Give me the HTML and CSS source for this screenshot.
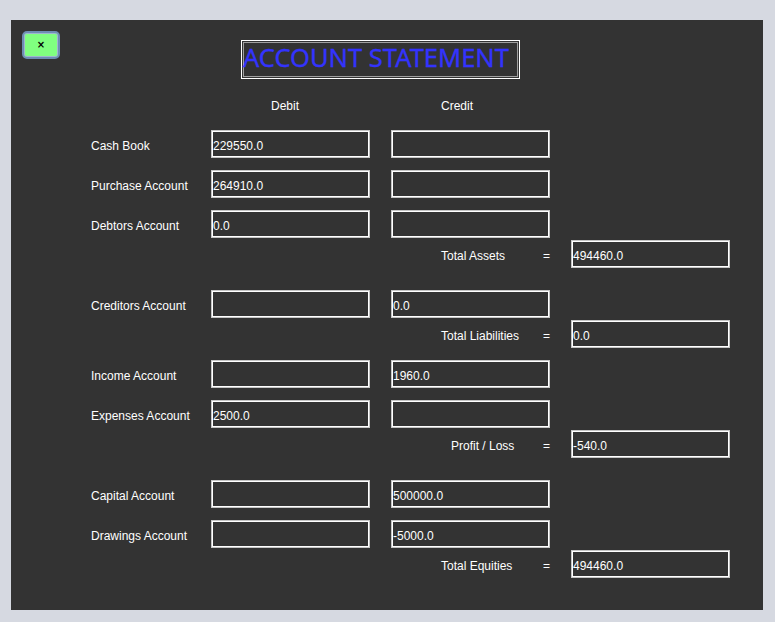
FILE: index.html
```html
<!DOCTYPE html>
<html>
<head>
<meta charset="utf-8">
<link rel="stylesheet" href="styles.css">
</head>
<body>
<div class="panel">
  <div class="top">
    <button class="close">×</button>
    <div class="title">ACCOUNT STATEMENT</div>
  </div>
  <div class="heads">
    <span class="head-debit">Debit</span>
    <span class="head-credit">Credit</span>
  </div>

  <div class="row gap-first">
    <span class="label">Cash Book</span>
    <div class="field">229550.0</div>
    <div class="field"></div>
  </div>
  <div class="row">
    <span class="label">Purchase Account</span>
    <div class="field">264910.0</div>
    <div class="field"></div>
  </div>
  <div class="row">
    <span class="label">Debtors Account</span>
    <div class="field">0.0</div>
    <div class="field"></div>
  </div>
  <div class="row tight">
    <span></span><span></span>
    <div class="total"><span class="total-label">Total Assets</span><span>=</span></div>
    <div class="field">494460.0</div>
  </div>

  <div class="row section">
    <span class="label">Creditors Account</span>
    <div class="field"></div>
    <div class="field">0.0</div>
  </div>
  <div class="row tight">
    <span></span><span></span>
    <div class="total"><span class="total-label wide">Total Liabilities</span><span>=</span></div>
    <div class="field">0.0</div>
  </div>

  <div class="row">
    <span class="label">Income Account</span>
    <div class="field"></div>
    <div class="field">1960.0</div>
  </div>
  <div class="row">
    <span class="label">Expenses Account</span>
    <div class="field">2500.0</div>
    <div class="field"></div>
  </div>
  <div class="row tight">
    <span></span><span></span>
    <div class="total"><span class="total-label profit">Profit / Loss</span><span>=</span></div>
    <div class="field">-540.0</div>
  </div>

  <div class="row section">
    <span class="label">Capital Account</span>
    <div class="field"></div>
    <div class="field">500000.0</div>
  </div>
  <div class="row">
    <span class="label">Drawings Account</span>
    <div class="field"></div>
    <div class="field">-5000.0</div>
  </div>
  <div class="row tight">
    <span></span><span></span>
    <div class="total"><span class="total-label">Total Equities</span><span>=</span></div>
    <div class="field">494460.0</div>
  </div>
</div>
</body>
</html>
```
FILE: styles.css
```css
html, body {
  margin: 0;
  padding: 0;
  background: #d6d9e1;
}
body {
  font-family: "Liberation Sans", Arial, sans-serif;
  font-size: 12px;
  color: #ffffff;
}
.panel {
  margin: 20px 0 0 11px;
  width: 752px;
  height: 590px;
  background: #333333;
  box-sizing: border-box;
  overflow: hidden;
}
.top {
  display: flex;
  align-items: flex-start;
  padding: 11px 0 0 11px;
}
.close {
  width: 38px;
  height: 28px;
  box-sizing: border-box;
  margin: 0;
  padding: 0;
  border: 2px solid #6e8db4;
  border-radius: 5px;
  background: #80ff80;
  box-shadow: inset 0 0 0 1px #9fb6cf;
  color: #000;
  font-family: "DejaVu Sans", sans-serif;
  font-size: 10px;
  font-weight: bold;
  line-height: 1;
}
.title {
  margin: 9px 0 0 181px;
  width: 279px;
  height: 39px;
  box-sizing: border-box;
  border: 1px solid #ffffff;
  box-shadow: inset 0 0 0 1px #333333, inset 0 0 0 2px #a0a0a0;
  color: #3333ff;
  font-family: "Noto Sans", "Open Sans", sans-serif;
  font-size: 25.5px;
  line-height: 32px;
  padding-left: 1px;
  white-space: nowrap;
  -webkit-text-stroke: 0.3px #3333ff;
}
.heads {
  display: grid;
  grid-template-columns: 99px 159px 159px;
  column-gap: 21px;
  padding-left: 80px;
  margin-top: 20px;
  line-height: 14px;
}
.head-debit { grid-column: 2; padding-left: 60px; }
.head-credit { grid-column: 3; padding-left: 50px; }

.row {
  display: grid;
  grid-template-columns: 99px 159px 159px 159px;
  column-gap: 21px;
  padding-left: 80px;
  height: 28px;
  align-items: center;
  margin-top: 12px;
}
.row.gap-first { margin-top: 17px; }
.row.tight { margin-top: 2px; }
.row.section { margin-top: 22px; }
.label {
  white-space: nowrap;
  padding-top: 3px;
}
.field {
  height: 28px;
  box-sizing: border-box;
  border: 1px solid #c4c4c4;
  box-shadow: inset 0 0 0 1px #ffffff;
  padding: 2px 0 0 1px;
  line-height: 26px;
  color: #ffffff;
}
.total {
  display: flex;
  white-space: nowrap;
  padding-top: 3px;
}
.total-label {
  width: 104px;
  padding-left: 50px;
}
.total-label.wide { width: 107px; }
.total-label.profit { width: 92px; padding-left: 60px; }
```
